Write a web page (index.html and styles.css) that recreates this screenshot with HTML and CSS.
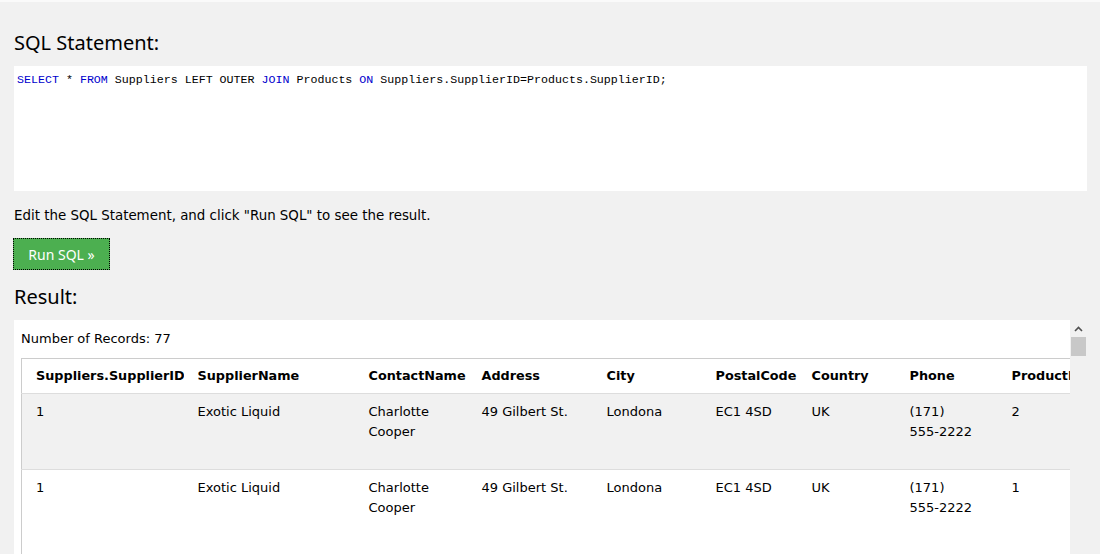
FILE: index.html
```html
<!DOCTYPE html>
<html>
<head>
<meta charset="utf-8">
<link rel="stylesheet" href="styles.css">
</head>
<body>
<div class="page">
  <h2 class="title title-sql">SQL Statement:</h2>
  <div class="sqlbox"><code class="code"><span class="kw">SELECT</span> * <span class="kw">FROM</span> Suppliers LEFT OUTER <span class="kw">JOIN</span> Products <span class="kw">ON</span> Suppliers.SupplierID=Products.SupplierID;</code></div>
  <p class="hint">Edit the SQL Statement, and click "Run SQL" to see the result.</p>
  <button class="run">Run SQL »</button>
  <h2 class="title title-result">Result:</h2>
  <div class="result">
    <div class="result-content">
      <div class="count">Number of Records: 77</div>
      <table class="grid">
        <thead>
          <tr>
            <th class="c1">Suppliers.SupplierID</th><th class="c2">SupplierName</th><th class="c3">ContactName</th><th class="c4">Address</th><th class="c5">City</th><th class="c6">PostalCode</th><th class="c7">Country</th><th class="c8">Phone</th><th class="c9">ProductID</th>
          </tr>
        </thead>
        <tbody>
          <tr class="odd">
            <td>1</td><td>Exotic Liquid</td><td>Charlotte Cooper</td><td>49 Gilbert St.</td><td>Londona</td><td>EC1 4SD</td><td>UK</td><td>(171) <span class="nowrap">555-2222</span></td><td>2</td>
          </tr>
          <tr class="tall">
            <td>1</td><td>Exotic Liquid</td><td>Charlotte Cooper</td><td>49 Gilbert St.</td><td>Londona</td><td>EC1 4SD</td><td>UK</td><td>(171) <span class="nowrap">555-2222</span></td><td>1</td>
          </tr>
        </tbody>
      </table>
    </div>
    <div class="scrollbar">
      <div class="arrow"><svg width="9" height="6" viewBox="0 0 9 6"><path d="M1 5 L4.5 1.5 L8 5" fill="none" stroke="#505050" stroke-width="1.6"/></svg></div>
      <div class="thumb"></div>
    </div>
  </div>
</div>
</body>
</html>
```

FILE: styles.css
```css
html, body {
  margin: 0;
  padding: 0;
  height: 100%;
  overflow: hidden;
  background: #fafafa;
}

.page {
  margin-top: 2px;
  background: #f1f1f1;
  padding: 0 13px 0 14px;
  display: flex;
  flex-direction: column;
  align-items: flex-start;
}

.page > * {
  flex-shrink: 0;
}

.title {
  font-family: "Noto Sans", "Open Sans", sans-serif;
  font-weight: 400;
  font-size: 20px;
  line-height: 28px;
  color: #000;
  margin: 0;
}

.title-sql {
  margin-top: 27px;
}

.title-result {
  margin-top: 13px;
}

.sqlbox {
  align-self: stretch;
  margin-top: 9px;
  height: 125px;
  box-sizing: border-box;
  background: #fff;
  padding: 7px 3px;
  font-size: 11.65px;
  line-height: 14px;
}

.code {
  display: block;
  font-family: "Liberation Mono", monospace;
  font-size: 11.65px;
  line-height: 14px;
  color: #000;
  white-space: pre;
}

.kw {
  color: #0000cd;
}

.hint {
  font-family: "DejaVu Sans", Verdana, sans-serif;
  font-size: 13.4px;
  line-height: 20px;
  margin: 15px 0 0 0;
  color: #000;
}

.run {
  margin: 12px 0 0 -1px;
  width: 97px;
  height: 32px;
  box-sizing: border-box;
  background: #4caf50;
  color: #fff;
  border: 1px dotted #000;
  font-family: "Noto Sans", "Open Sans", sans-serif;
  font-size: 14px;
  padding: 0;
  cursor: pointer;
}

.result {
  align-self: stretch;
  margin-top: 9px;
  height: 280px;
  display: flex;
  background: #fff;
}

.result-content {
  flex: 1;
  min-width: 0;
  overflow: hidden;
  padding: 9px 0 0 7px;
  font-family: "DejaVu Sans", Verdana, sans-serif;
  font-size: 13px;
  line-height: 20px;
  color: #000;
}

.count {
  margin-bottom: 9px;
}

.grid {
  border-collapse: collapse;
  table-layout: fixed;
  width: 1250px;
  border: 1px solid #ccc;
}

.grid th {
  box-sizing: border-box;
  text-align: left;
  font-weight: 700;
  font-size: 12.8px;
  padding: 7px 14px;
  border-bottom: 1px solid #ddd;
  white-space: nowrap;
  overflow: hidden;
}

.c1 { width: 162px; }
.c2 { width: 171px; }
.c3 { width: 113px; }
.c4 { width: 125px; }
.c5 { width: 109px; }
.c6 { width: 96px; }
.c7 { width: 98px; }
.c8 { width: 102px; }
.c9 { width: 274px; }

.grid td {
  vertical-align: top;
  padding: 8px 14px;
  height: 59px;
  border-bottom: 1px solid #ddd;
}

.grid tr.tall td {
  height: 100px;
}

.nowrap {
  white-space: nowrap;
}

.grid tr.odd td {
  background: #f1f1f1;
}

.scrollbar {
  width: 17px;
  background: #f1f1f1;
  display: flex;
  flex-direction: column;
  align-items: center;
}

.arrow {
  height: 17px;
  width: 17px;
  display: flex;
  align-items: center;
  justify-content: center;
}

.thumb {
  width: 15px;
  height: 19px;
  background: #c8c8c8;
}
```
